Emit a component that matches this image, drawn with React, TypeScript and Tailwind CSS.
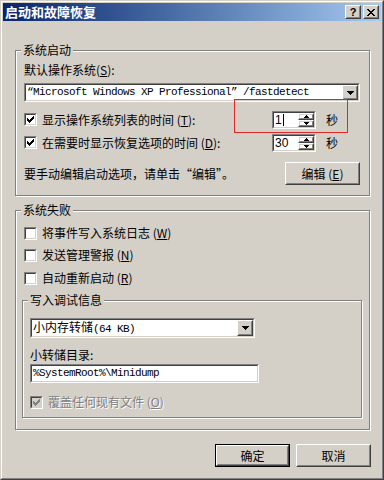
import React from "react";

type BoxProps = { className?: string; inner?: string; children?: React.ReactNode };

function Sunken({ className = "", inner = "", children }: BoxProps) {
  return (
    <div className={`border border-t-[#808080] border-l-[#808080] border-r-white border-b-white ${className}`}>
      <div className={`h-full w-full border border-t-[#404040] border-l-[#404040] border-r-[#d4d0c8] border-b-[#d4d0c8] ${inner}`}>
        {children}
      </div>
    </div>
  );
}

function Raised({ className = "", inner = "", children }: BoxProps) {
  return (
    <div className={`border border-t-white border-l-white border-r-[#404040] border-b-[#404040] ${className}`}>
      <div className={`h-full w-full border border-t-[#d4d0c8] border-l-[#d4d0c8] border-r-[#808080] border-b-[#808080] flex items-center justify-center ${inner}`}>
        {children}
      </div>
    </div>
  );
}

function Check({ checked = false, disabled = false }: { checked?: boolean; disabled?: boolean }) {
  const rects: [number, number, number][] = [
    [6, 0, 1], [5, 1, 2], [0, 2, 1], [4, 2, 3], [0, 3, 2], [3, 3, 3], [0, 4, 5], [1, 5, 3], [2, 6, 1],
  ];
  return (
    <Sunken className="w-[13px] h-[13px] shrink-0" inner={disabled ? "bg-[#d4d0c8] p-px" : "bg-white p-px"}>
      {checked && (
        <svg width="7" height="7" viewBox="0 0 7 7" shapeRendering="crispEdges" className="block">
          {rects.map(([x, y, w], i) => (
            <rect key={i} x={x} y={y} width={w} height={1} fill={disabled ? "#808080" : "#000"} />
          ))}
        </svg>
      )}
    </Sunken>
  );
}

function DownArrow() {
  return (
    <svg width="7" height="4" viewBox="0 0 7 4" shapeRendering="crispEdges" className="block">
      <path d="M0 0h7v1H6v1H5v1H4v1H3V3H2V2H1V1H0z" fill="#000" />
    </svg>
  );
}

function SpinUp() {
  return (
    <svg width="5" height="3" viewBox="0 0 5 3" shapeRendering="crispEdges" className="block">
      <path d="M2 0h1v1h1v1h1v1H0V2h1V1h1z" fill="#000" />
    </svg>
  );
}

function SpinDown() {
  return (
    <svg width="5" height="3" viewBox="0 0 5 3" shapeRendering="crispEdges" className="block">
      <path d="M0 0h5v1H4v1H3v1H2V2H1V1H0z" fill="#000" />
    </svg>
  );
}

function Spin({ value, caret = false }: { value: string; caret?: boolean }) {
  return (
    <Sunken className="w-[44px] h-[18px] shrink-0" inner="bg-white flex">
      <div className="flex-1 flex items-center pl-[1px] font-['Liberation_Sans',sans-serif] text-[12px] leading-[14px]">
        <span>{value}</span>
        {caret && <span className="ml-[1px] w-px h-[12px] bg-black" />}
      </div>
      <div className="w-[16px] flex flex-col">
        <Raised className="h-[7px] w-full">
          <SpinUp />
        </Raised>
        <Raised className="h-[7px] w-full">
          <SpinDown />
        </Raised>
      </div>
    </Sunken>
  );
}

function Group({ label, className = "", children }: { label: string; className?: string; children?: React.ReactNode }) {
  return (
    <div className={`relative border border-[#808080] shadow-[inset_1px_1px_0_#fff,1px_1px_0_#fff] ${className}`}>
      <span className="absolute left-[5px] top-[-9px] px-[2px] bg-[#d4d0c8] leading-[16px]">{label}</span>
      {children}
    </div>
  );
}

function CheckRow({ checked, disabled, children }: { checked?: boolean; disabled?: boolean; children: React.ReactNode }) {
  return (
    <div className="flex items-center gap-[5px]">
      <Check checked={checked} disabled={disabled} />
      <span className={disabled ? "leading-[16px] text-[#808080] [text-shadow:1px_1px_0_#fff]" : "leading-[16px]"}>{children}</span>
    </div>
  );
}

function CloseGlyph() {
  const rows: [number, number, number][] = [
    [0, 0, 2], [6, 0, 2], [1, 1, 2], [5, 1, 2], [2, 2, 4], [3, 3, 2], [2, 4, 4], [1, 5, 2], [5, 5, 2], [0, 6, 2], [6, 6, 2],
  ];
  return (
    <svg width="8" height="7" viewBox="0 0 8 7" shapeRendering="crispEdges" className="block">
      {rows.map(([x, y, w], i) => (
        <rect key={i} x={x} y={y} width={w} height={1} fill="#000" />
      ))}
    </svg>
  );
}

export default function App() {
  return (
    <div className="relative w-[384px] h-[480px] border border-t-[#d4d0c8] border-l-[#d4d0c8] border-r-[#404040] border-b-[#404040] bg-[#d4d0c8] font-['Noto_Sans_CJK_SC',sans-serif] text-[12px] text-black">
      <div className="h-full border border-t-white border-l-white border-r-[#808080] border-b-[#808080] p-px flex flex-col">
        {/* Title bar */}
        <div className="h-[18px] flex items-center bg-gradient-to-r from-[#0a246a] to-[#a6caf0] pl-[2px] pr-[2px]">
          <span className="flex-1 text-white font-bold text-[13px] leading-[18px]">启动和故障恢复</span>
          <div className="flex gap-[2px]">
            <Raised className="w-[16px] h-[14px] bg-[#d4d0c8]">
              <span className="font-['Liberation_Sans',sans-serif] font-bold text-[11px] leading-[10px]">?</span>
            </Raised>
            <Raised className="w-[16px] h-[14px] bg-[#d4d0c8]">
              <CloseGlyph />
            </Raised>
          </div>
        </div>

        {/* Group 1 */}
        <Group label="系统启动" className="ml-[12px] mt-[29px] w-[355px] pt-[11px] pl-[8px] pr-[9px] pb-[10px]">
          <div className="h-[16px] leading-[16px]">
            默认操作系统(<u>S</u>):
          </div>
          <Sunken className="mt-[5px] h-[19px] w-full" inner="bg-white flex items-center">
            <span className="flex-1 pl-[1px] font-['Liberation_Mono',monospace] text-[11px] tracking-[-0.6px] leading-[15px] whitespace-nowrap overflow-hidden">
              “Microsoft Windows XP Professional” /fastdetect
            </span>
            <Raised className="w-[16px] h-full shrink-0 bg-[#d4d0c8]">
              <DownArrow />
            </Raised>
          </Sunken>
          <div className="mt-[6px] h-[23px] flex items-center">
            <div className="w-[248px]">
              <CheckRow checked>
                显示操作系统列表的时间 (<u>T</u>):
              </CheckRow>
            </div>
            <Spin value="1" caret />
            <span className="ml-[10px] leading-[16px]">秒</span>
          </div>
          <div className="h-[23px] flex items-center">
            <div className="w-[248px]">
              <CheckRow checked>
                在需要时显示恢复选项的时间 (<u>D</u>):
              </CheckRow>
            </div>
            <Spin value="30" />
            <span className="ml-[10px] leading-[16px]">秒</span>
          </div>
          <div className="mt-[8px] h-[23px] flex items-center justify-between">
            <span className="leading-[16px]">要手动编辑启动选项，请单击“编辑”。</span>
            <Raised className="w-[75px] h-[23px]">
              <span className="leading-[16px]">
                编辑 (<u>E</u>)
              </span>
            </Raised>
          </div>
        </Group>

        {/* Group 2 */}
        <Group label="系统失败" className="ml-[12px] mt-[14px] w-[355px] pt-[11px] pl-[6px] pr-[7px] pb-[11px]">
          <div className="pl-[2px]">
            <div className="h-[22px] flex items-center">
              <CheckRow>
                将事件写入系统日志 (<u>W</u>)
              </CheckRow>
            </div>
            <div className="h-[22px] flex items-center">
              <CheckRow>
                发送管理警报 (<u>N</u>)
              </CheckRow>
            </div>
            <div className="mt-[1px] h-[22px] flex items-center">
              <CheckRow>
                自动重新启动 (<u>R</u>)
              </CheckRow>
            </div>
          </div>

          <Group label="写入调试信息" className="mt-[11px] w-[340px] pt-[17px] pl-[7px] pb-[6px]">
            <Sunken className="h-[20px] w-[225px]" inner="bg-white flex items-center">
              <span className="flex-1 pl-[1px] leading-[16px] whitespace-nowrap">
                小内存转储
                <span className="font-['Liberation_Mono',monospace] text-[11px] tracking-[-0.6px]">(64 KB)</span>
              </span>
              <Raised className="w-[16px] h-full shrink-0 bg-[#d4d0c8]">
                <DownArrow />
              </Raised>
            </Sunken>
            <div className="mt-[9px] h-[16px] leading-[16px]">小转储目录:</div>
            <Sunken className="mt-[1px] h-[19px] w-[229px]" inner="bg-white flex items-center">
              <span className="pl-[1px] font-['Liberation_Mono',monospace] text-[11px] tracking-[-0.6px] leading-[15px] whitespace-nowrap">
                %SystemRoot%\Minidump
              </span>
            </Sunken>
            <div className="mt-[10px] h-[18px] flex items-center">
              <CheckRow checked disabled>
                覆盖任何现有文件 (<u>O</u>)
              </CheckRow>
            </div>
          </Group>
        </Group>

        {/* Buttons */}
        <div className="mt-[14px] flex justify-end gap-[6px] pr-[10px]">
          <div className="w-[75px] h-[23px] border border-black">
            <Raised className="w-full h-full">
              <span className="leading-[16px]">确定</span>
            </Raised>
          </div>
          <Raised className="w-[75px] h-[23px]">
            <span className="leading-[16px]">取消</span>
          </Raised>
        </div>
      </div>

      {/* Red annotation rectangle */}
      <div className="absolute left-[233px] top-[98px] w-[114px] h-[34px] border border-[#e02828]" />
    </div>
  );
}
